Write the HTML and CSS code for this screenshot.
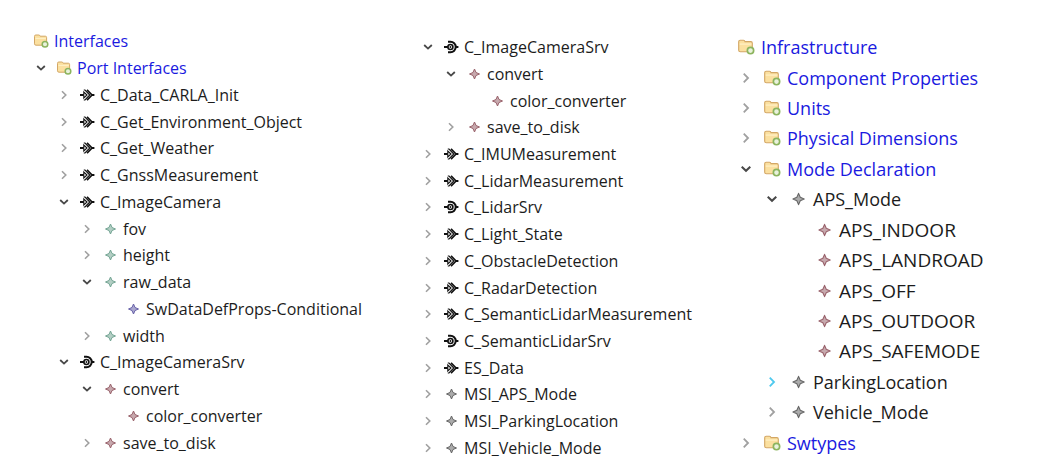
FILE: index.html
```
<!DOCTYPE html>
<html lang="en">

<head>
    <meta charset="UTF-8">
    <meta name="viewport" content="width=device-width, initial-scale=1.0">
    <title>Interfaces and Infrastructure</title>
    <link rel="stylesheet" href="styles.css">
</head>

<body>
    <!-- shared icons -->
    <svg class="sprite" aria-hidden="true">
        <symbol id="folder" viewBox="0 0 16 16">
            <path d="M1.5 10.8V3.4Q1.5 2 2.8 2H5.8Q6.8 2 7.1 3.2H12.4Q13.6 3.2 13.6 4.6V11Q13.6 12.2 12.4 12.2H3Q1.5 12.2 1.5 10.8Z" fill="#fbe0a0" stroke="#d3a765"/>
            <path d="M2.4 5.4H12.8" stroke="#fff1c8"/>
            <circle cx="12" cy="11.2" r="2.8" fill="#e9f2dc" stroke="#8cb45e" stroke-width="1.5"/>
        </symbol>
        <symbol id="data" viewBox="0 0 16 16">
            <path d="M1 8H5M12 8H15.4" stroke="#111" stroke-width="1.8"/>
            <path d="M4.8 5V11L8 8Z" fill="#fff" stroke="#111" stroke-width="1.1"/>
            <path d="M4.8 3H6L10.8 8L6 13H4.8" fill="none" stroke="#111" stroke-width="1.1"/>
            <path d="M8 2.8L13 8L8 13.2" fill="none" stroke="#111" stroke-width="1.7"/>
        </symbol>
        <symbol id="service" viewBox="0 0 16 16">
            <path d="M1 8H6M12 8H15.4" stroke="#111" stroke-width="2"/>
            <path d="M5 2.8H7.5A5.2 5.2 0 0 1 7.5 13.2H5" fill="none" stroke="#111" stroke-width="2"/>
            <circle cx="7.4" cy="8" r="2.5" fill="#fff" stroke="#111" stroke-width="1.6"/>
            <circle cx="7.4" cy="8" r="0.9" fill="#111"/>
        </symbol>
        <symbol id="star" viewBox="0 0 16 16">
            <path d="M8.5 3L10 6.5L13.5 8L10 9.5L8.5 13L7 9.5L3.5 8L7 6.5Z" fill="currentColor" fill-opacity="0.55" stroke="currentColor" stroke-linejoin="round"/>
        </symbol>
        <symbol id="closed" viewBox="0 0 16 16">
            <path d="M6 4.2L9.8 8L6 11.8" fill="none" stroke="currentColor" stroke-width="1.6"/>
        </symbol>
        <symbol id="open" viewBox="0 0 16 16">
            <path d="M4.2 6L8 9.6L11.8 6" fill="none" stroke="currentColor" stroke-width="1.8"/>
        </symbol>
    </svg>

    <main class="panels">
        <ul class="tree interfaces">
            <li class="row level-0 package"><svg class="icon"><use href="#folder"/></svg><span>Interfaces</span></li>
            <li class="row level-1 package"><button class="toggle open" aria-label="Collapse"><svg><use href="#open"/></svg></button><svg class="icon"><use href="#folder"/></svg><span>Port Interfaces</span></li>
            <li class="row level-2"><button class="toggle" aria-label="Expand"><svg><use href="#closed"/></svg></button><svg class="icon"><use href="#data"/></svg><span>C_Data_CARLA_Init</span></li>
            <li class="row level-2"><button class="toggle" aria-label="Expand"><svg><use href="#closed"/></svg></button><svg class="icon"><use href="#data"/></svg><span>C_Get_Environment_Object</span></li>
            <li class="row level-2"><button class="toggle" aria-label="Expand"><svg><use href="#closed"/></svg></button><svg class="icon"><use href="#data"/></svg><span>C_Get_Weather</span></li>
            <li class="row level-2"><button class="toggle" aria-label="Expand"><svg><use href="#closed"/></svg></button><svg class="icon"><use href="#data"/></svg><span>C_GnssMeasurement</span></li>
            <li class="row level-2"><button class="toggle open" aria-label="Collapse"><svg><use href="#open"/></svg></button><svg class="icon"><use href="#data"/></svg><span>C_ImageCamera</span></li>
            <li class="row level-3"><button class="toggle" aria-label="Expand"><svg><use href="#closed"/></svg></button><svg class="icon green"><use href="#star"/></svg><span>fov</span></li>
            <li class="row level-3"><button class="toggle" aria-label="Expand"><svg><use href="#closed"/></svg></button><svg class="icon green"><use href="#star"/></svg><span>height</span></li>
            <li class="row level-3"><button class="toggle open" aria-label="Collapse"><svg><use href="#open"/></svg></button><svg class="icon green"><use href="#star"/></svg><span>raw_data</span></li>
            <li class="row level-4"><svg class="icon violet"><use href="#star"/></svg><span>SwDataDefProps-Conditional</span></li>
            <li class="row level-3"><button class="toggle" aria-label="Expand"><svg><use href="#closed"/></svg></button><svg class="icon green"><use href="#star"/></svg><span>width</span></li>
            <li class="row level-2"><button class="toggle open" aria-label="Collapse"><svg><use href="#open"/></svg></button><svg class="icon"><use href="#service"/></svg><span>C_ImageCameraSrv</span></li>
            <li class="row level-3"><button class="toggle open" aria-label="Collapse"><svg><use href="#open"/></svg></button><svg class="icon red"><use href="#star"/></svg><span>convert</span></li>
            <li class="row level-4"><svg class="icon red"><use href="#star"/></svg><span>color_converter</span></li>
            <li class="row level-3"><button class="toggle" aria-label="Expand"><svg><use href="#closed"/></svg></button><svg class="icon red"><use href="#star"/></svg><span>save_to_disk</span></li>
        </ul>

        <ul class="tree services">
            <li class="row level-0"><button class="toggle open" aria-label="Collapse"><svg><use href="#open"/></svg></button><svg class="icon"><use href="#service"/></svg><span>C_ImageCameraSrv</span></li>
            <li class="row level-1"><button class="toggle open" aria-label="Collapse"><svg><use href="#open"/></svg></button><svg class="icon red"><use href="#star"/></svg><span>convert</span></li>
            <li class="row level-2"><svg class="icon red"><use href="#star"/></svg><span>color_converter</span></li>
            <li class="row level-1"><button class="toggle" aria-label="Expand"><svg><use href="#closed"/></svg></button><svg class="icon red"><use href="#star"/></svg><span>save_to_disk</span></li>
            <li class="row level-0"><button class="toggle" aria-label="Expand"><svg><use href="#closed"/></svg></button><svg class="icon"><use href="#data"/></svg><span>C_IMUMeasurement</span></li>
            <li class="row level-0"><button class="toggle" aria-label="Expand"><svg><use href="#closed"/></svg></button><svg class="icon"><use href="#data"/></svg><span>C_LidarMeasurement</span></li>
            <li class="row level-0"><button class="toggle" aria-label="Expand"><svg><use href="#closed"/></svg></button><svg class="icon"><use href="#service"/></svg><span>C_LidarSrv</span></li>
            <li class="row level-0"><button class="toggle" aria-label="Expand"><svg><use href="#closed"/></svg></button><svg class="icon"><use href="#data"/></svg><span>C_Light_State</span></li>
            <li class="row level-0"><button class="toggle" aria-label="Expand"><svg><use href="#closed"/></svg></button><svg class="icon"><use href="#data"/></svg><span>C_ObstacleDetection</span></li>
            <li class="row level-0"><button class="toggle" aria-label="Expand"><svg><use href="#closed"/></svg></button><svg class="icon"><use href="#data"/></svg><span>C_RadarDetection</span></li>
            <li class="row level-0"><button class="toggle" aria-label="Expand"><svg><use href="#closed"/></svg></button><svg class="icon"><use href="#data"/></svg><span>C_SemanticLidarMeasurement</span></li>
            <li class="row level-0"><button class="toggle" aria-label="Expand"><svg><use href="#closed"/></svg></button><svg class="icon"><use href="#service"/></svg><span>C_SemanticLidarSrv</span></li>
            <li class="row level-0"><button class="toggle" aria-label="Expand"><svg><use href="#closed"/></svg></button><svg class="icon"><use href="#data"/></svg><span>ES_Data</span></li>
            <li class="row level-0"><button class="toggle" aria-label="Expand"><svg><use href="#closed"/></svg></button><svg class="icon gray"><use href="#star"/></svg><span>MSI_APS_Mode</span></li>
            <li class="row level-0"><button class="toggle" aria-label="Expand"><svg><use href="#closed"/></svg></button><svg class="icon gray"><use href="#star"/></svg><span>MSI_ParkingLocation</span></li>
            <li class="row level-0"><button class="toggle" aria-label="Expand"><svg><use href="#closed"/></svg></button><svg class="icon gray"><use href="#star"/></svg><span>MSI_Vehicle_Mode</span></li>
        </ul>

        <ul class="tree infrastructure">
            <li class="row level-0 package"><svg class="icon"><use href="#folder"/></svg><span>Infrastructure</span></li>
            <li class="row level-1 package"><button class="toggle" aria-label="Expand"><svg><use href="#closed"/></svg></button><svg class="icon"><use href="#folder"/></svg><span>Component Properties</span></li>
            <li class="row level-1 package"><button class="toggle" aria-label="Expand"><svg><use href="#closed"/></svg></button><svg class="icon"><use href="#folder"/></svg><span>Units</span></li>
            <li class="row level-1 package"><button class="toggle" aria-label="Expand"><svg><use href="#closed"/></svg></button><svg class="icon"><use href="#folder"/></svg><span>Physical Dimensions</span></li>
            <li class="row level-1 package"><button class="toggle open" aria-label="Collapse"><svg><use href="#open"/></svg></button><svg class="icon"><use href="#folder"/></svg><span>Mode Declaration</span></li>
            <li class="row level-2"><button class="toggle open" aria-label="Collapse"><svg><use href="#open"/></svg></button><svg class="icon gray"><use href="#star"/></svg><span>APS_Mode</span></li>
            <li class="row level-3"><svg class="icon red"><use href="#star"/></svg><span>APS_INDOOR</span></li>
            <li class="row level-3"><svg class="icon red"><use href="#star"/></svg><span>APS_LANDROAD</span></li>
            <li class="row level-3"><svg class="icon red"><use href="#star"/></svg><span>APS_OFF</span></li>
            <li class="row level-3"><svg class="icon red"><use href="#star"/></svg><span>APS_OUTDOOR</span></li>
            <li class="row level-3"><svg class="icon red"><use href="#star"/></svg><span>APS_SAFEMODE</span></li>
            <li class="row level-2"><button class="toggle active" aria-label="Expand"><svg><use href="#closed"/></svg></button><svg class="icon gray"><use href="#star"/></svg><span>ParkingLocation</span></li>
            <li class="row level-2"><button class="toggle" aria-label="Expand"><svg><use href="#closed"/></svg></button><svg class="icon gray"><use href="#star"/></svg><span>Vehicle_Mode</span></li>
            <li class="row level-1 package"><button class="toggle" aria-label="Expand"><svg><use href="#closed"/></svg></button><svg class="icon"><use href="#folder"/></svg><span>Swtypes</span></li>
        </ul>
    </main>
</body>

</html>
```
FILE: styles.css
```
body {
    margin: 0;
    background-color: #fff;
    color: #1c1c1c;
    font-family: "Segoe UI", "Open Sans", "Noto Sans", sans-serif;
}

.sprite {
    display: none;
}

.panels {
    display: grid;
    grid-template-columns: 41fr 29fr 35fr;
    align-items: start;
    height: 100vh;
    overflow: hidden;
}

/* rows share the height of the tree equally */
.tree {
    --indent: 23px;
    --icon: 16px;
    --gap: 7px;
    display: grid;
    grid-auto-rows: 1fr;
    height: calc(100vh - 30px);
    margin: 0;
    padding: 0 0 0 10px;
    list-style: none;
    font-size: 16px;
    line-height: 20px;
}

.interfaces {
    margin-top: 28px;
}

.services {
    height: calc(100vh - 31px);
    margin-top: 34px;
}

.infrastructure {
    --indent: 26px;
    --icon: 18px;
    --gap: 8px;
    height: calc(100vh - 32px);
    margin-top: 32px;
    padding-left: 11px;
    font-size: 18px;
}

.row {
    display: grid;
    grid-template-columns: var(--icon) var(--icon) 1fr;
    column-gap: var(--gap);
    align-items: center;
    white-space: nowrap;
}

.level-1 {
    padding-left: var(--indent);
}

.level-2 {
    padding-left: calc(var(--indent) * 2);
}

.level-3 {
    padding-left: calc(var(--indent) * 3);
}

.level-4 {
    padding-left: calc(var(--indent) * 4);
}

.package {
    color: #1a1ae0;
}

.row span {
    grid-column: 3;
    margin-left: -2px;
}

.infrastructure .level-3 {
    font-size: 19px;
}

.icon {
    grid-column: 2;
    width: var(--icon);
    height: var(--icon);
}

.toggle {
    width: var(--icon);
    height: var(--icon);
    padding: 0;
    border: none;
    background: none;
    color: #a0a0a0;
    cursor: pointer;
}

.toggle svg {
    display: block;
    width: 100%;
    height: 100%;
}

.toggle.open {
    color: #484848;
}

.toggle.active {
    color: #4ec9ee;
}

.green {
    color: #74a594;
}

.violet {
    color: #6660a8;
}

.red {
    color: #99626b;
}

.gray {
    color: #666;
}
```
